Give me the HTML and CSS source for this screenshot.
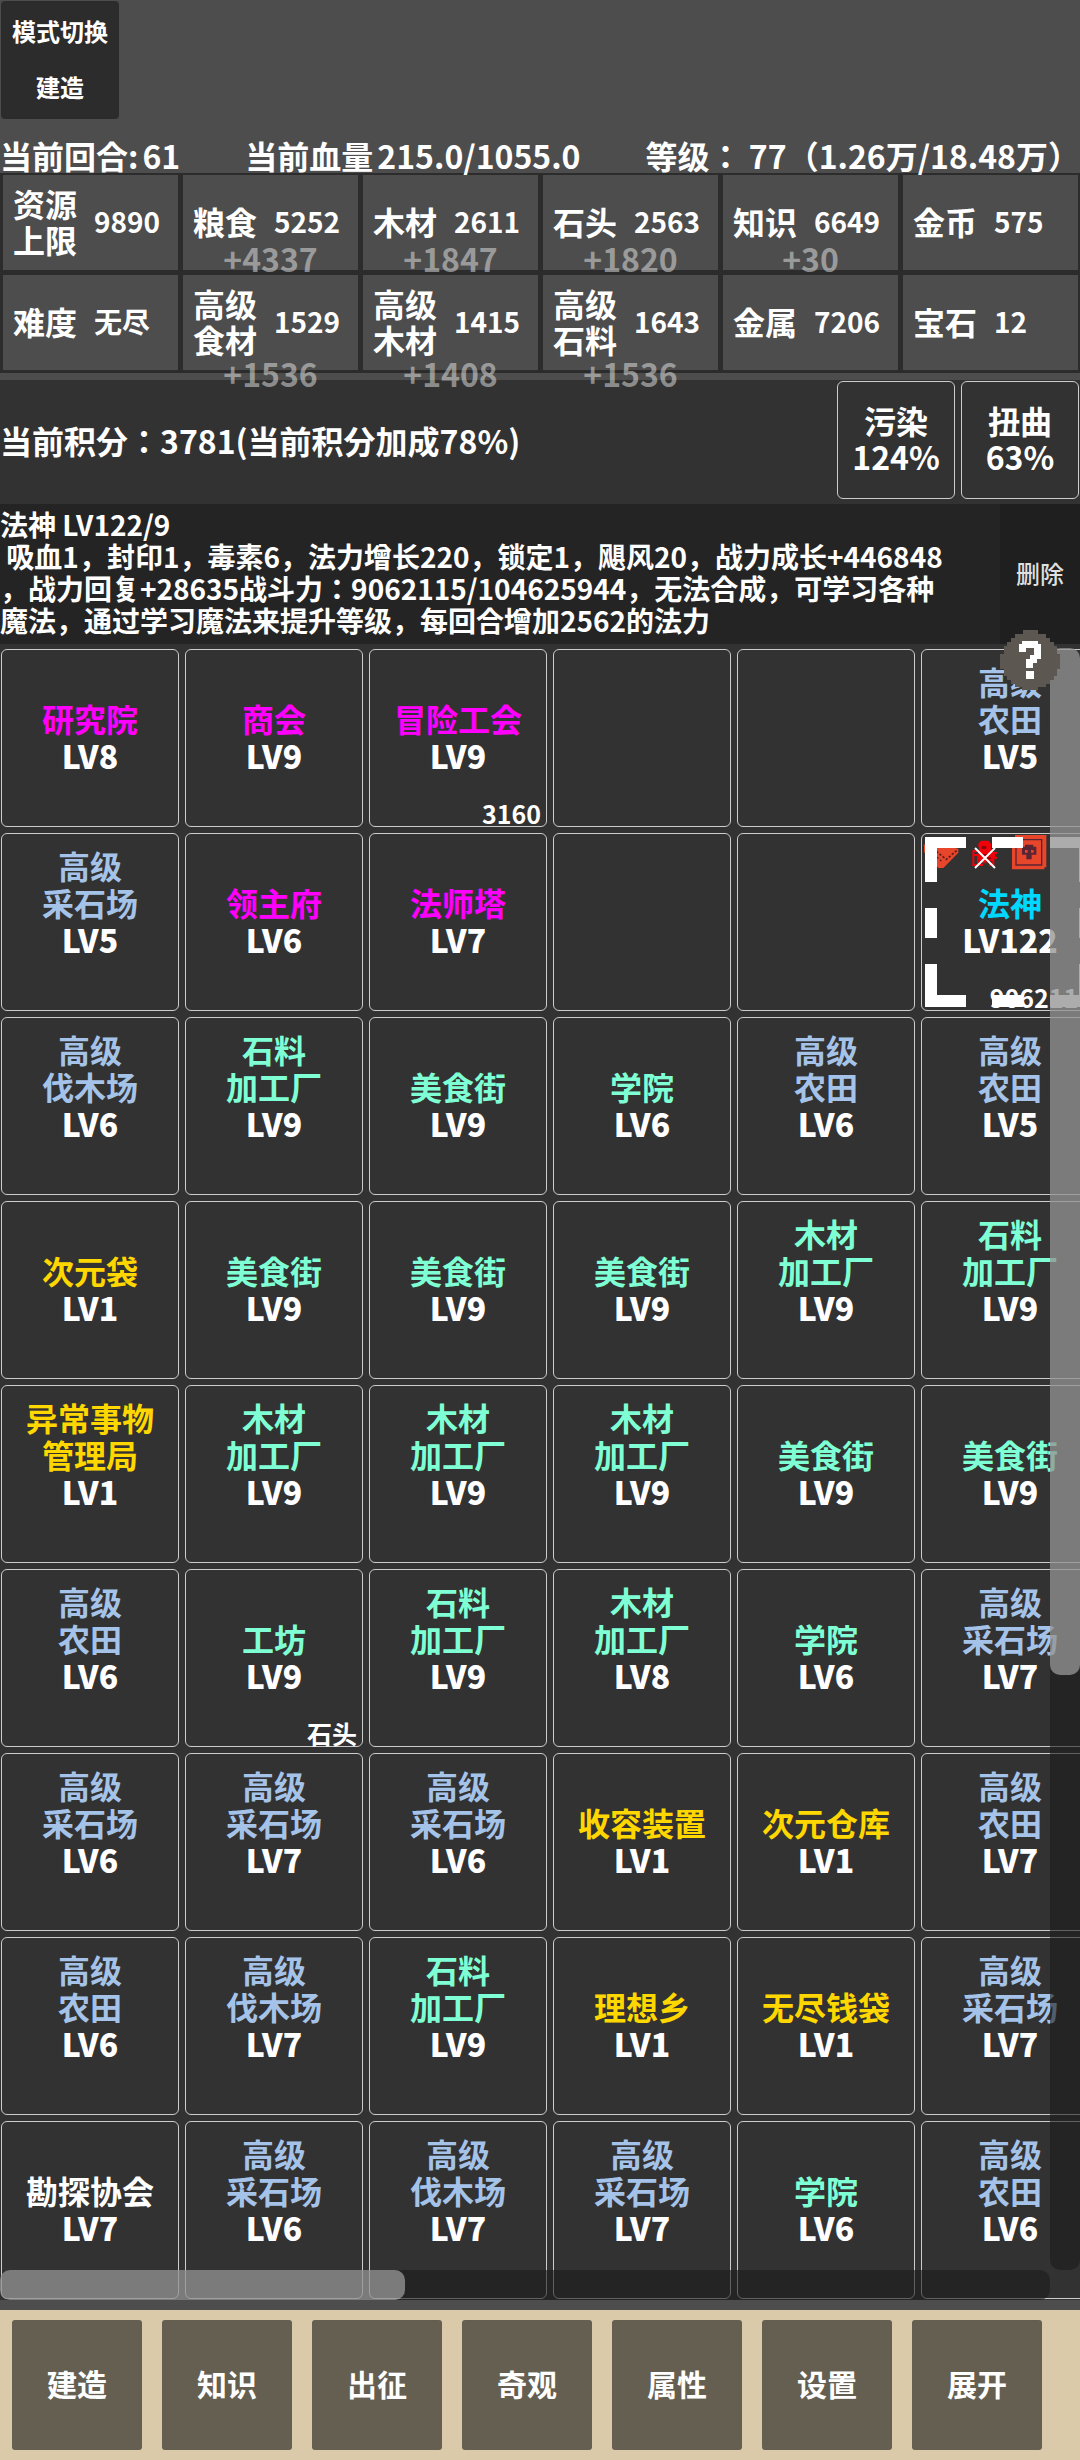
FILE: index.html
```
<!DOCTYPE html>
<html lang="zh-CN">
<head>
    <meta charset="UTF-8">
    <meta name="viewport" content="width=device-width, initial-scale=1.0">
    <title>建造</title>
    <link rel="stylesheet" href="styles.css">
</head>
<body>
    <header>
        <button class="mode-button"><span>模式切换</span><span>建造</span></button>
        <div class="status">
            <p>当前回合:<span class="status-value">61</span></p>
            <p>当前血量<span class="status-value">215.0/1055.0</span></p>
            <p>等级： 77（1.26万/18.48万）</p>
        </div>
    </header>

    <section class="resources">
        <div class="resource"><span class="label">资源<br>上限</span><span class="amount">9890</span></div>
        <div class="resource"><span class="label">粮食</span><span class="amount">5252</span><span class="income">+4337</span></div>
        <div class="resource"><span class="label">木材</span><span class="amount">2611</span><span class="income">+1847</span></div>
        <div class="resource"><span class="label">石头</span><span class="amount">2563</span><span class="income">+1820</span></div>
        <div class="resource"><span class="label">知识</span><span class="amount">6649</span><span class="income">+30</span></div>
        <div class="resource"><span class="label">金币</span><span class="amount">575</span></div>
        <div class="resource"><span class="label">难度</span><span class="amount">无尽</span></div>
        <div class="resource tall"><span class="label">高级<br>食材</span><span class="amount">1529</span><span class="income">+1536</span></div>
        <div class="resource tall"><span class="label">高级<br>木材</span><span class="amount">1415</span><span class="income">+1408</span></div>
        <div class="resource tall"><span class="label">高级<br>石料</span><span class="amount">1643</span><span class="income">+1536</span></div>
        <div class="resource"><span class="label">金属</span><span class="amount">7206</span></div>
        <div class="resource"><span class="label">宝石</span><span class="amount">12</span></div>
    </section>

    <section class="score">
        <p>当前积分：3781(当前积分加成78%)</p>
        <div class="score-buttons">
            <button class="score-button">污染<br>124%</button>
            <button class="score-button">扭曲<br>63%</button>
        </div>
    </section>

    <section class="info">
        <p class="info-text">法神 LV122/9<br>&nbsp;吸血1，封印1，毒素6，法力增长220，锁定1，飓风20，战力成长+446848<br>，战力回复+28635战斗力：9062115/104625944，无法合成，可学习各种<br>魔法，通过学习魔法来提升等级，每回合增加2562的法力</p>
        <button class="delete-button">删除</button>
        <button class="help-button" aria-label="帮助">
            <svg viewBox="0 0 60 60" shape-rendering="crispEdges">
                <path fill="#5c5751" d="M23 0h15v4h8v4h4v4h4v4h3v8h3v15h-3v7h-3v4h-4v4h-4v3h-8v3H22v-3h-7v-3h-4v-4H7v-4H4v-7H0V24h4v-8h3v-4h4V8h4V4h8z"/>
                <path fill="#fff" d="M22 11h16v3h3v15h-4v4h-4v5h-7v-9h4v-4h4v-7h-8v4h-7v-8h3zM26 41h8v8h-8z"/>
            </svg>
        </button>
    </section>

    <main class="board">
        <div class="grid">
            <button class="card magenta"><span>研究院</span><b>LV8</b></button>
            <button class="card magenta"><span>商会</span><b>LV9</b></button>
            <button class="card magenta"><span>冒险工会</span><b>LV9</b><i>3160</i></button>
            <button class="card" aria-label="空地"></button>
            <button class="card" aria-label="空地"></button>
            <button class="card blue"><span>高级<br>农田</span><b>LV5</b></button>

            <button class="card blue"><span>高级<br>采石场</span><b>LV5</b></button>
            <button class="card magenta"><span>领主府</span><b>LV6</b></button>
            <button class="card magenta"><span>法师塔</span><b>LV7</b></button>
            <button class="card" aria-label="空地"></button>
            <button class="card" aria-label="空地"></button>
            <button class="card cyan">
                <span>法神</span><b>LV122</b><i>9062115</i>
                <div class="effects">
                    <svg viewBox="0 0 108 108">
                        <path fill="#e8462b" d="M3 34l8-10 95 20v12l-45 46H46L3 54z"/>
                        <path fill="none" stroke="#5b1a1e" stroke-width="5" stroke-dasharray="7 5" d="M40 52l30 24 32-27"/>
                        <path fill="none" stroke="#5b1a1e" stroke-width="4" stroke-dasharray="6 5" d="M42 70l16 13"/>
                    </svg>
                    <svg viewBox="0 0 108 108">
                        <path fill="#f00008" d="M42 20h22l8 9v17h6v8h12v6h-6v8h6v6h-8v22H66v-8H48v8H16V48h20v-8h-2V29z"/>
                        <path fill="#333" d="M22 54h12v6H22zM22 66h8v24h-8zM37 82h10v8H37zM58 82h18v6H58z"/>
                        <path fill="#8a0509" d="M44 36h14v9H44zM44 60h24v5H44zM56 70h16v6H56z"/>
                        <path stroke="#fff" stroke-width="6" d="M24 42l60 60M84 42L24 102"/>
                    </svg>
                    <svg viewBox="0 0 108 108">
                        <path fill="#e8462b" d="M12 3h94v97h-6v6H3V18h9z"/>
                        <path fill="none" stroke="#5b2433" stroke-width="4" d="M15 17h77v76H15z"/>
                        <path fill="#5b2433" d="M42 32h25v6h9v24H62v14H46V62H33V38h9z"/>
                        <path fill="#e8462b" d="M42 48h8v8h-8zM60 48h8v8h-8z"/>
                    </svg>
                </div>
                <svg class="selection" viewBox="0 0 166 170" fill="#fff">
                    <path d="M0 0h41v11H12v34H0zM67 0h31v11H67zM125 0h41v45h-12V11h-29z"/>
                    <path d="M0 71h12v30H0zM154 71h12v30h-12z"/>
                    <path d="M0 127h12v31h29v12H0zM67 158h31v12H67zM154 127h12v43h-41v-12h29z"/>
                </svg>
            </button>

            <button class="card blue"><span>高级<br>伐木场</span><b>LV6</b></button>
            <button class="card green"><span>石料<br>加工厂</span><b>LV9</b></button>
            <button class="card green"><span>美食街</span><b>LV9</b></button>
            <button class="card green"><span>学院</span><b>LV6</b></button>
            <button class="card blue"><span>高级<br>农田</span><b>LV6</b></button>
            <button class="card blue"><span>高级<br>农田</span><b>LV5</b></button>

            <button class="card gold"><span>次元袋</span><b>LV1</b></button>
            <button class="card green"><span>美食街</span><b>LV9</b></button>
            <button class="card green"><span>美食街</span><b>LV9</b></button>
            <button class="card green"><span>美食街</span><b>LV9</b></button>
            <button class="card green"><span>木材<br>加工厂</span><b>LV9</b></button>
            <button class="card green"><span>石料<br>加工厂</span><b>LV9</b></button>

            <button class="card gold"><span>异常事物<br>管理局</span><b>LV1</b></button>
            <button class="card green"><span>木材<br>加工厂</span><b>LV9</b></button>
            <button class="card green"><span>木材<br>加工厂</span><b>LV9</b></button>
            <button class="card green"><span>木材<br>加工厂</span><b>LV9</b></button>
            <button class="card green"><span>美食街</span><b>LV9</b></button>
            <button class="card green"><span>美食街</span><b>LV9</b></button>

            <button class="card blue"><span>高级<br>农田</span><b>LV6</b></button>
            <button class="card green"><span>工坊</span><b>LV9</b><i>石头</i></button>
            <button class="card green"><span>石料<br>加工厂</span><b>LV9</b></button>
            <button class="card green"><span>木材<br>加工厂</span><b>LV8</b></button>
            <button class="card green"><span>学院</span><b>LV6</b></button>
            <button class="card blue"><span>高级<br>采石场</span><b>LV7</b></button>

            <button class="card blue"><span>高级<br>采石场</span><b>LV6</b></button>
            <button class="card blue"><span>高级<br>采石场</span><b>LV7</b></button>
            <button class="card blue"><span>高级<br>采石场</span><b>LV6</b></button>
            <button class="card gold"><span>收容装置</span><b>LV1</b></button>
            <button class="card gold"><span>次元仓库</span><b>LV1</b></button>
            <button class="card blue"><span>高级<br>农田</span><b>LV7</b></button>

            <button class="card blue"><span>高级<br>农田</span><b>LV6</b></button>
            <button class="card blue"><span>高级<br>伐木场</span><b>LV7</b></button>
            <button class="card green"><span>石料<br>加工厂</span><b>LV9</b></button>
            <button class="card gold"><span>理想乡</span><b>LV1</b></button>
            <button class="card gold"><span>无尽钱袋</span><b>LV1</b></button>
            <button class="card blue"><span>高级<br>采石场</span><b>LV7</b></button>

            <button class="card"><span>勘探协会</span><b>LV7</b></button>
            <button class="card blue"><span>高级<br>采石场</span><b>LV6</b></button>
            <button class="card blue"><span>高级<br>伐木场</span><b>LV7</b></button>
            <button class="card blue"><span>高级<br>采石场</span><b>LV7</b></button>
            <button class="card green"><span>学院</span><b>LV6</b></button>
            <button class="card blue"><span>高级<br>农田</span><b>LV6</b></button>
        </div>
        <div class="scrollbar vertical"><div class="thumb"></div></div>
        <div class="scrollbar horizontal"><div class="thumb"></div></div>
    </main>

    <nav>
        <button>建造</button>
        <button>知识</button>
        <button>出征</button>
        <button>奇观</button>
        <button>属性</button>
        <button>设置</button>
        <button>展开</button>
    </nav>
</body>
</html>
```
FILE: styles.css
```
* {
    box-sizing: border-box;
}

body {
    margin: 0;
    background-color: #4d4d4d;
    color: #fff;
    font-family: "Noto Sans CJK JP", sans-serif;
    font-feature-settings: "locl" 0;
    font-size: 32px;
    font-weight: bold;
    line-height: 36px;
    overflow-x: hidden;
}

p {
    margin: 0;
}

button {
    margin: 0;
    padding: 0;
    border: none;
    background: none;
    color: inherit;
    font: inherit;
    font-feature-settings: inherit;
    cursor: pointer;
}

.mode-button {
    display: flex;
    flex-direction: column;
    align-items: center;
    justify-content: center;
    gap: 20px;
    width: 118px;
    height: 118px;
    margin: 1px;
    padding-bottom: 2px;
    border-radius: 4px;
    background-color: #2c2c2c;
    font-size: 24px;
}

.status {
    display: flex;
    justify-content: space-between;
    margin-top: 18px;
    white-space: nowrap;
}

.status-value {
    margin-left: 4px;
}

.resources {
    display: grid;
    grid-template-columns: repeat(6, 1fr);
    gap: 5px;
    padding: 2px 2px 3px 3px;
    background-color: #2c2c2c;
}

.resource {
    position: relative;
    display: flex;
    align-items: center;
    gap: 17px;
    height: 95px;
    padding: 0 0 4px 10px;
    background-color: #4d4d4d;
    white-space: nowrap;
}

.amount {
    font-size: 28px;
}

/* income floats under the label and may hang out of the cell */
.income {
    position: absolute;
    top: 65px;
    left: 0;
    right: 0;
    z-index: 1;
    text-align: center;
    color: rgba(255, 255, 255, 0.45);
}

.tall .income {
    top: 80px;
}

.score {
    display: flex;
    align-items: center;
    justify-content: space-between;
    height: 124px;
    margin-top: 7px;
    padding: 0 1px 4px 0;
    background-color: #323232;
}

.score-buttons {
    display: flex;
    gap: 6px;
}

.score-button {
    width: 118px;
    height: 118px;
    padding-bottom: 4px;
    border: 1px solid #ccc;
    border-radius: 6px;
}

.info {
    position: relative;
    display: flex;
    justify-content: space-between;
    height: 140px;
    background-color: #242424;
    font-size: 28px;
    line-height: 32px;
}

.info-text {
    padding-top: 4px;
    white-space: nowrap;
}

.delete-button {
    width: 80px;
    padding-bottom: 2px;
    background-color: #1f1f1f;
    color: #e0e0e0;
    font-size: 24px;
    font-weight: 500;
}

.help-button {
    position: absolute;
    right: 20px;
    bottom: -46px;
    z-index: 2;
    width: 60px;
    height: 60px;
}

.help-button svg {
    display: block;
}

.board {
    position: relative;
    overflow: hidden;
    padding: 5px 1px 1px;
    background-color: #323232;
}

.grid {
    display: grid;
    grid-template-columns: repeat(6, 178px);
    grid-auto-rows: 178px;
    gap: 6px;
}

.card {
    position: relative;
    display: flex;
    flex-direction: column;
    align-items: center;
    justify-content: flex-end;
    padding-bottom: 52px;
    border: 1px solid #ccc;
    border-radius: 6px;
    line-height: 37px;
}

.card b {
    color: #fff;
}

.card i {
    position: absolute;
    right: 5px;
    bottom: -6px;
    color: #fff;
    font-size: 25px;
    font-style: normal;
}

.magenta {
    color: #f0f;
}

.blue {
    color: #a5c3e8;
}

.green {
    color: #7fffd4;
}

.gold {
    color: #ffd700;
}

.cyan {
    color: #00d8ff;
}

.effects {
    position: absolute;
    top: 0;
    left: 1px;
    display: flex;
    gap: 8px;
}

.effects svg {
    width: 36px;
    height: 36px;
}

.selection {
    position: absolute;
    top: 3px;
    left: 3px;
    width: 166px;
    height: 170px;
}

.scrollbar {
    position: absolute;
    border-radius: 10px;
    background-color: rgba(26, 26, 26, 0.6);
}

.thumb {
    border-radius: 10px;
    background-color: rgba(255, 255, 255, 0.4);
}

.vertical {
    top: 4px;
    right: 0;
    bottom: 30px;
    width: 30px;
}

.vertical .thumb {
    height: 63.3%;
}

.horizontal {
    left: 0;
    right: 30px;
    bottom: 0;
    height: 30px;
}

.horizontal .thumb {
    width: 38.6%;
    height: 100%;
}

nav {
    display: flex;
    gap: 20px;
    margin-top: 10px;
    padding: 10px 38px 10px 12px;
    background-color: #dacaa9;
}

nav button {
    flex: 1;
    height: 130px;
    padding-bottom: 4px;
    border-radius: 3px;
    background-color: #655f52;
    font-size: 30px;
}
```
